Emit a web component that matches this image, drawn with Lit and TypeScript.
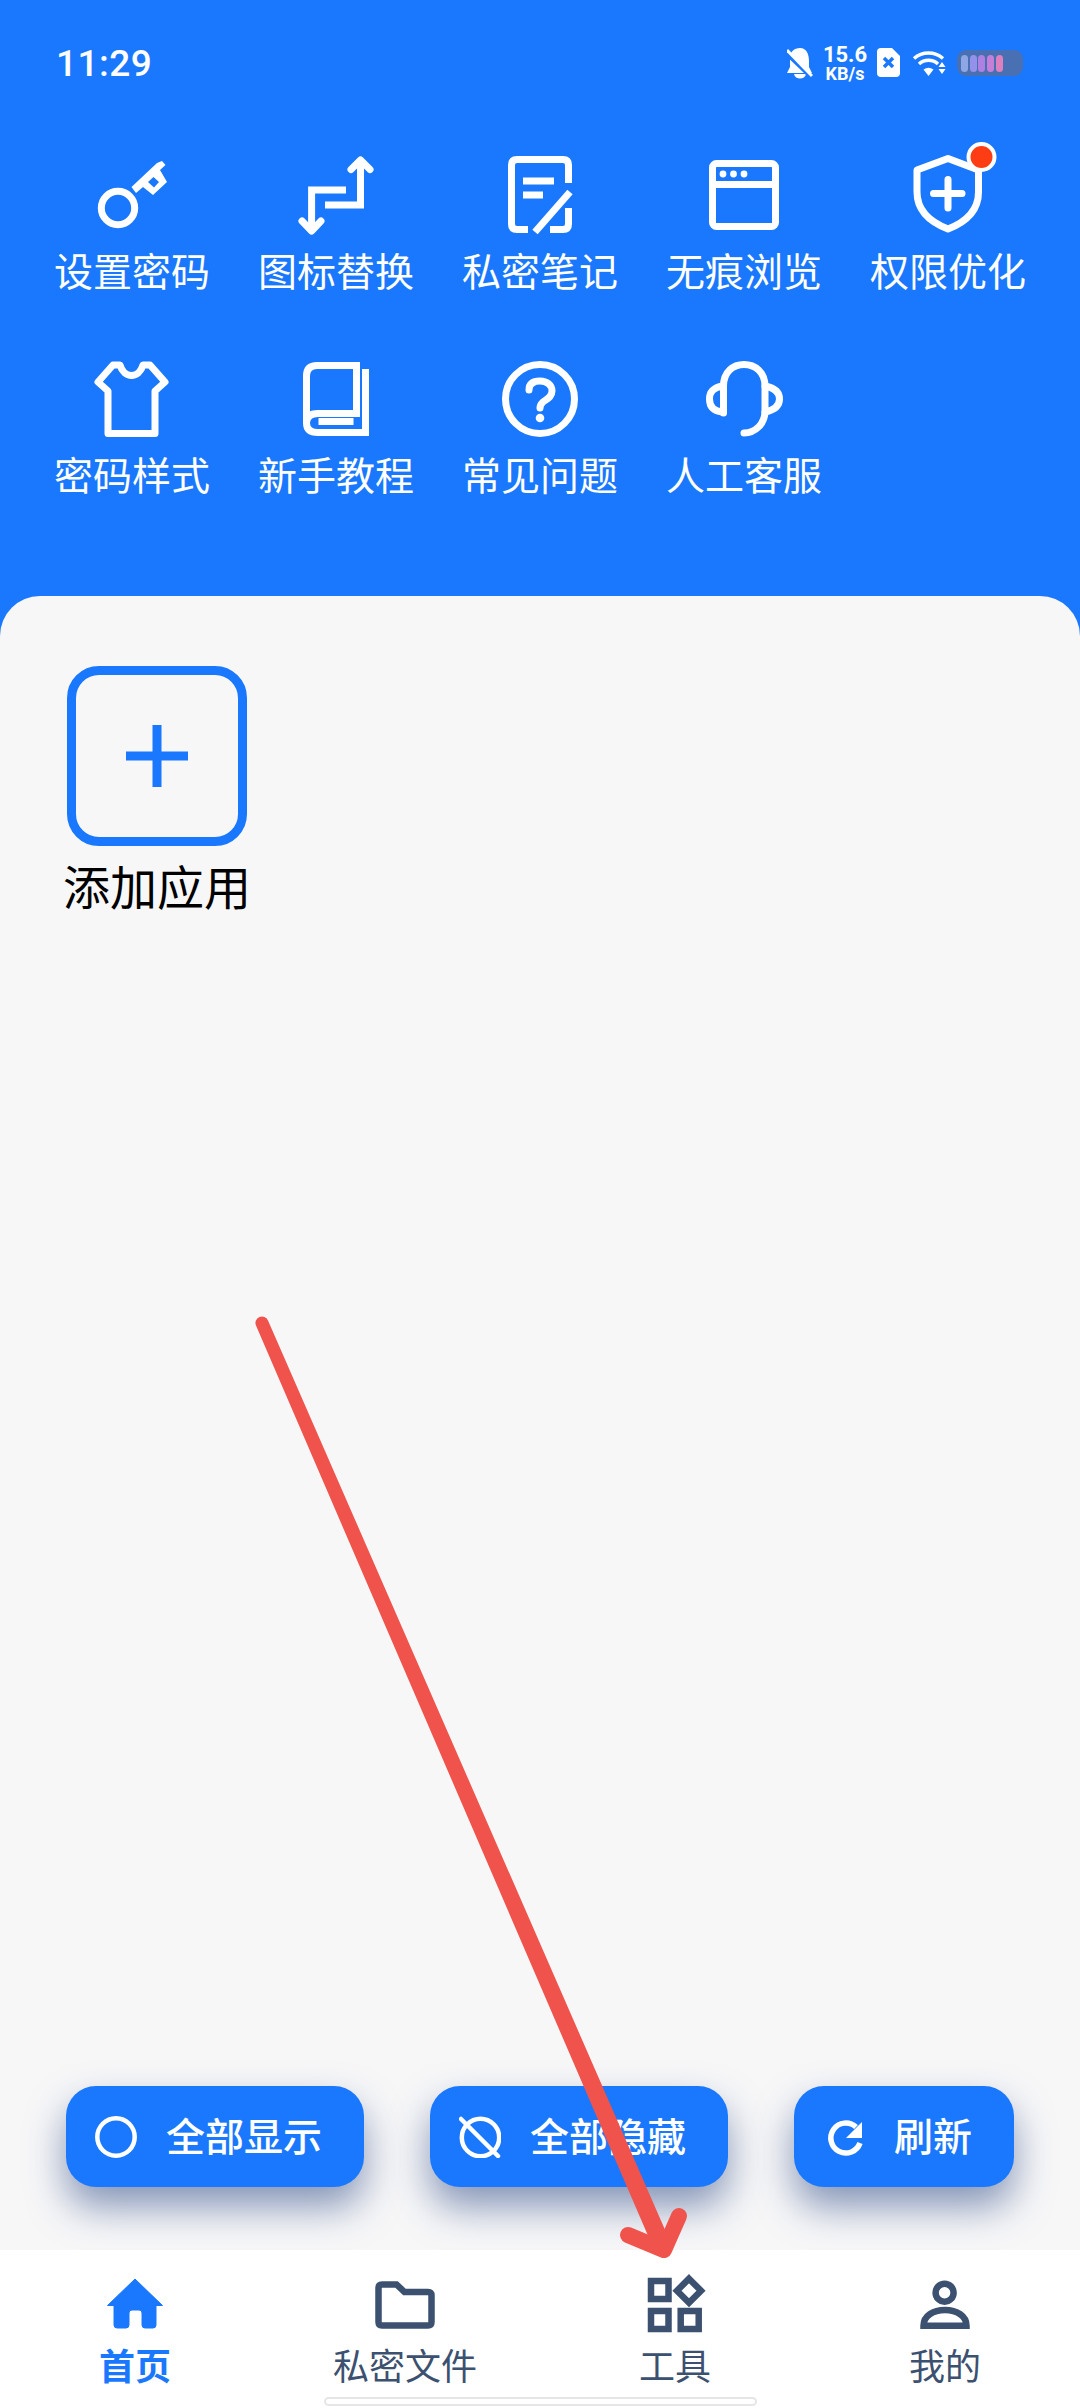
import { LitElement, html, css, svg } from "lit";
import { customElement } from "lit/decorators.js";

const box = (cx: number, top: number, w: number, h: number, body: unknown, cls = "ic") =>
  html`<svg class=${cls} width=${w} height=${h} viewBox="${cx - w / 2} ${top} ${w} ${h}">${body}</svg>`;

const menu: [string, unknown][] = [
  ["设置密码", svg`<circle cx="118" cy="208" r="16.7"/><path class="f" fill-rule="evenodd" d="M162 161L165.500 165L160 170L167 182L153 195L143 187L136 193L131.500 187L157 163ZM148 182L153.500 177L159 182L154 187.500Z"/>`],
  ["图标替换", svg`<path d="M360.500 164V205H325"/><path d="M346 190H311.600V226"/><path class="r" d="M351 169.500L360.500 160L370 169.500"/><path class="r" d="M302 221L311.600 231L321 221"/>`],
  ["私密笔记", svg`<path d="M528 229.500H517Q511.500 229.500 511.500 224V165Q511.500 159.500 517 159.500H563Q568.500 159.500 568.500 165V183"/><path d="M568.500 208V224Q568.500 229.500 563 229.500H550"/><path d="M523 181H554M523 195H543"/><path stroke-width="8" d="M535 232L570 192"/>`],
  ["无痕浏览", svg`<rect x="712.500" y="163.500" width="63" height="63" rx="4"/><path d="M712.500 184.500H775.500"/><circle class="f" cx="723" cy="174" r="3.400"/><circle class="f" cx="733.500" cy="174" r="3.400"/><circle class="f" cx="744" cy="174" r="3.400"/>`],
  ["权限优化", svg`<path class="r" d="M948 158.500L917 170V192C917 210 930 222 948 229C966 222 978.500 210 978.500 192V170Z"/><path class="r" d="M933.500 193.500H962M948 179.500V208"/><circle class="dot-ring" cx="981.500" cy="157" r="13"/>`],
  ["密码样式", svg`<path class="r" d="M108 433.500H155V391L165 382L150 365H143C139 379 124 379 120 365H113L98 382L108 391Z"/>`],
  ["新手教程", svg`<path d="M306.500 422V376Q306.500 365.500 317 365.500H356.500V413.500H318Q306.500 413.500 306.500 423Q306.500 432.500 318 432.500H365.500V369"/><rect class="f" x="318.500" y="418" width="35" height="7"/>`],
  ["常见问题", svg`<circle cx="540" cy="399" r="34.500"/><path class="r" stroke-width="6.500" d="M529 390C529 383 534 381 540 381C547 381 552 385 552 391C552 397 547 399 543 402C541 404 540 406 540 408"/><circle class="f" cx="540" cy="418" r="4.300"/>`],
  ["人工客服", svg`<path class="r" d="M723.500 413V386C723.500 372 733 364.500 744 364.500C755 364.500 765 372 765 386V411C765 424 755 433 744 433"/><path class="r" d="M722 386C713 388 709.500 392 709.500 399C709.500 406 713 411 722 412"/><path class="r" d="M765 386C775 388 779.500 392 779.500 399C779.500 406 775 410 765 412"/>`],
];

const centers = [132, 336, 540, 744, 948];

const navItems: [string, number, unknown, boolean][] = [
  ["首页", 135, svg`<path class="nf-active" d="M135 2279L162.500 2305.500H156V2325Q156 2328 153 2328H145Q142 2328 142 2325V2313Q142 2310 139 2310H132Q129 2310 129 2313V2325Q129 2328 126 2328H117Q114 2328 114 2325V2305.500H107.500Z"/>`, true],
  ["私密文件", 405, svg`<path class="ns" d="M378.500 2288Q378.500 2284.500 382 2284.500H396.500L404.500 2292H428Q431.500 2292 431.500 2295.500V2322Q431.500 2325.500 428 2325.500H382Q378.500 2325.500 378.500 2322Z"/>`, false],
  ["工具", 675, svg`<rect class="ns" x="651" y="2281" width="17.500" height="18"/><rect class="ns" x="651" y="2311" width="17.500" height="18"/><rect class="ns" x="680.700" y="2311" width="18" height="18"/><path class="ns" d="M689 2278.700L701 2290.700L689 2302.700L677 2290.700Z"/>`, false],
  ["我的", 945, svg`<circle class="ns" cx="944.600" cy="2292.700" r="9"/><path class="ns" d="M923.500 2325.700C923.500 2316 933 2310 945 2310C957 2310 966.500 2316 966.500 2325.700Z"/>`, false],
];

@customElement("app-root")
export class AppRoot extends LitElement {
  static styles = css`
    :host {
      display: flex;
      flex-direction: column;
      position: relative;
      width: 1080px;
      height: 2408px;
      overflow: hidden;
      background: #1a78ff;
      font-family: "Noto Sans CJK SC", "Noto Sans", sans-serif;
    }
    .status {
      height: 140px;
      box-sizing: border-box;
      padding: 0 57px 14px 56px;
      display: flex;
      align-items: center;
      justify-content: space-between;
      color: #fff;
    }
    .time { font: 500 37px/1 Roboto, sans-serif; letter-spacing: 0.5px; }
    .indicators { display: flex; align-items: center; gap: 11px; }
    .speed {
      display: flex;
      flex-direction: column;
      align-items: center;
      font-family: Roboto, sans-serif;
      font-weight: 700;
      width: 42px;
    }
    .speed b { font-size: 22px; line-height: 21px; font-weight: 700; }
    .speed span { font-size: 18px; line-height: 17px; }
    .battery {
      width: 66px;
      height: 26px;
      border-radius: 9px;
      background: #4a70b4;
      display: flex;
      gap: 1.700px;
      align-items: center;
      padding: 0 4px;
      box-sizing: border-box;
    }
    .battery i { width: 7px; height: 17px; border-radius: 3.500px; display: block; }
    .s1 { background: #8fa6e4; }
    .s2 { background: #9491ea; }
    .s3 { background: #ad80e2; }
    .s4 { background: #c67fd6; }
    .s5 { background: #de7fbe; }

    .grid {
      display: grid;
      grid-template-columns: repeat(5, 204px);
      grid-auto-rows: 204px;
      padding: 0 30px 48px;
    }
    .item { display: flex; flex-direction: column; align-items: center; color: #fff; }
    .label { font-size: 39px; line-height: 45px; margin-top: 7px; font-weight: 400; white-space: nowrap; }
    svg.ic { display: block; overflow: visible; }
    .ic * { fill: none; stroke: #fff; stroke-width: 7; }
    .ic .f { fill: #fff; stroke: none; }
    .ic .r { stroke-linecap: round; stroke-linejoin: round; }
    .ic .dot-ring { fill: #ff3d14; stroke: #fff; stroke-width: 4; }

    .sheet {
      flex: 1;
      display: flex;
      flex-direction: column;
      background: #f7f7f8;
      border-radius: 40px 40px 0 0;
      padding: 70px 66px 63px;
      box-sizing: border-box;
      min-height: 0;
    }
    .tile { width: 182px; display: flex; flex-direction: column; align-items: center; }
    .tile-box {
      width: 180px;
      height: 180px;
      box-sizing: border-box;
      border: 9px solid #1a78ff;
      border-radius: 32px;
      display: flex;
      align-items: center;
      justify-content: center;
    }
    .plus { display: block; }
    .plus path { stroke: #1a78ff; stroke-width: 9; fill: none; }
    .tile-label { margin-top: 11px; font-size: 47px; line-height: 56px; color: #000; white-space: nowrap; }

    .actions { margin-top: auto; display: flex; justify-content: space-between; }
    .btn {
      height: 101px;
      box-sizing: border-box;
      padding: 0 42px 0 29px;
      display: flex;
      align-items: center;
      gap: 29px;
      background: #1a78ff;
      color: #fff;
      border-radius: 30px;
      font-size: 39px;
      font-weight: 500;
      white-space: nowrap;
      box-shadow: 0 20px 38px rgba(30, 62, 125, 0.52);
    }
    .btn span { padding-bottom: 5px; }
    .btn svg { display: block; flex: none; }
    .btn svg * { fill: none; stroke: #fff; stroke-width: 4.500; }
    .btn svg .tri { fill: #fff; stroke: none; }
    .btn svg .w { stroke-width: 5.500; }

    .nav { height: 158px; background: #fff; display: flex; flex-direction: column; flex: none; position: relative; }
    .nav-row { display: grid; grid-template-columns: repeat(4, 270px); }
    .nav-item {
      display: flex;
      flex-direction: column;
      align-items: center;
      padding-top: 25px;
      color: #3c5070;
    }
    .nav-item.on { color: #1a78ff; font-weight: 700; }
    .nav-item svg { display: block; overflow: visible; }
    .ns { fill: none; stroke: #3c5070; stroke-width: 6.500; }
    .nf-active { fill: #1a78ff; stroke: #1a78ff; stroke-width: 1; stroke-linejoin: round; }
    .nav-label { font-size: 36px; line-height: 40px; margin-top: 9px; margin-bottom: 3px; white-space: nowrap; }
    .handle {
      width: 433px;
      height: 9px;
      margin: 10px auto 0;
      box-sizing: border-box;
      background: #fff;
      border: 2px solid #e6e6e6;
      border-radius: 5px;
    }
    .arrow { position: absolute; left: 0; top: 0; pointer-events: none; }
    .arrow .shaft { fill: #f0534b; }
    .arrow .head {
      fill: none;
      stroke: #f0534b;
      stroke-width: 16;
      stroke-linecap: round;
      stroke-linejoin: round;
    }
  `;

  render() {
    return html`
      <div class="status">
        <span class="time">11:29</span>
        <div class="indicators">
          <svg width="26" height="32" viewBox="787 47 26 32">
            <path fill="#fff" d="M800 48C807 48 809 55 809 61V67L812 73H787L790 67V58C790 52 794 48 800 48ZM794 74H806C805 80 795 80 794 74Z"/>
            <path fill="none" stroke="#1a78ff" stroke-width="4" d="M786 53L809 75"/>
            <path fill="none" stroke="#fff" stroke-width="3" d="M787 50L812 76"/>
          </svg>
          <div class="speed"><b>15.6</b><span>KB/s</span></div>
          <svg width="24" height="30" viewBox="878 49 24 30">
            <path fill="#fff" d="M882 49H893L901 57V74Q901 78 897 78H882Q878 78 878 74V53Q878 49 882 49Z"/>
            <path fill="none" stroke="#1a78ff" stroke-width="3.500" d="M885 59L894 68M894 59L885 68"/>
          </svg>
          <svg width="34" height="28" viewBox="912 51 34 28">
            <path fill="none" stroke="#fff" stroke-width="3.500" d="M914 60.500A22 22 0 0 1 943 60.500M919 66A14 14 0 0 1 938 66"/>
            <path fill="#fff" d="M923.500 71.500Q928.500 68 933.500 71.500L928.500 78ZM942 64L938.500 69H945.500ZM938.500 71H945.500L942 76Z"/>
          </svg>
          <div class="battery"><i class="s1"></i><i class="s2"></i><i class="s3"></i><i class="s4"></i><i class="s5"></i></div>
        </div>
      </div>

      <div class="grid">
        ${menu.map(([label, icon], i) => html`
          <div class="item">
            ${box(centers[i % 5], i < 5 ? 140 : 344, 100, 100, icon)}
            <span class="label">${label}</span>
          </div>`)}
      </div>

      <div class="sheet">
        <div class="tile">
          <div class="tile-box">
            <svg class="plus" width="62" height="62" viewBox="0 0 62 62"><path d="M0 31H62M31 0V62"/></svg>
          </div>
          <span class="tile-label">添加应用</span>
        </div>
        <div class="actions">
          <div class="btn">
            <svg width="42" height="42" viewBox="0 0 42 42"><circle cx="21" cy="21" r="18.700"/></svg>
            <span>全部显示</span>
          </div>
          <div class="btn">
            <svg width="42" height="42" viewBox="0 0 42 42"><circle cx="21.500" cy="21.500" r="18.700"/><path stroke-linecap="round" d="M2 3L39 40"/></svg>
            <span>全部隐藏</span>
          </div>
          <div class="btn">
            <svg width="42" height="42" viewBox="0 0 42 42"><path class="w" d="M33 11A15 15 0 1 0 37 27"/><path class="tri" d="M39 6V22H23Z"/></svg>
            <span>刷新</span>
          </div>
        </div>
      </div>

      <div class="nav">
        <div class="nav-row">
          ${navItems.map(([label, cx, icon, on]) => html`
            <div class="nav-item ${on ? "on" : ""}">
              <svg width="80" height="60" viewBox="${cx - 40} 2275 80 60">${icon}</svg>
              <span class="nav-label">${label}</span>
            </div>`)}
        </div>
        <div class="handle"></div>
      </div>

      <svg class="arrow" width="1080" height="2408" viewBox="0 0 1080 2408">
        <path class="shaft" d="M256 1325.600A6.500 6.500 0 0 1 268 1320.400L672.300 2246.400L655.700 2253.600Z"/>
        <path class="head" d="M628 2235L664 2250L679 2216"/>
      </svg>
    `;
  }
}
